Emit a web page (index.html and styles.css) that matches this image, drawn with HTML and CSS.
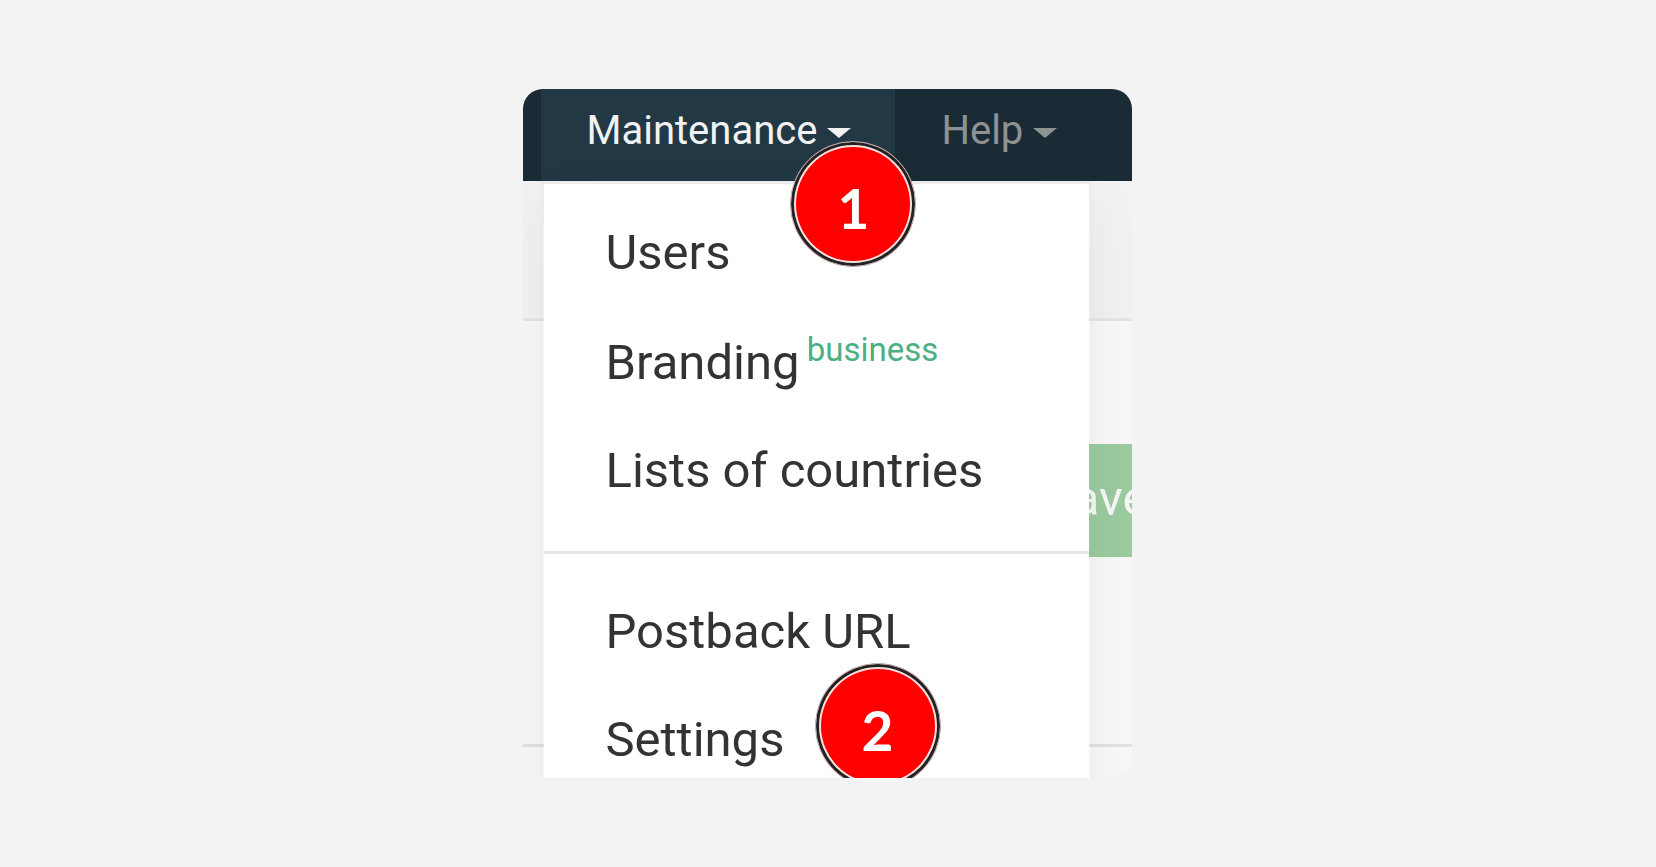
FILE: index.html
```
<!DOCTYPE html>
<html lang="en">
<head>
  <meta charset="UTF-8">
  <title>Maintenance</title>
  <meta name="viewport" content="width=device-width, initial-scale=1.0">
  <link rel="stylesheet" href="styles.css">
</head>
<body>
  <div class="card">
    <nav class="navbar">
      <div class="dropdown open">
        <button class="toggle" type="button" aria-expanded="true">Maintenance <span class="caret"></span></button>
        <ul class="menu">
          <li><a href="#">Users</a></li>
          <li><a href="#">Branding <sup>business</sup></a></li>
          <li><a href="#">Lists of countries</a></li>
          <li class="divider"></li>
          <li><a href="#">Postback URL</a></li>
          <li><a href="#">Settings</a><span class="badge badge-settings">2</span></li>
        </ul>
        <span class="badge badge-toggle">1</span>
      </div>
      <div class="dropdown">
        <button class="toggle" type="button">Help <span class="caret"></span></button>
      </div>
    </nav>

    <main class="page">
      <div class="page-header"></div>
      <div class="page-content">
        <button class="save" type="button">Save</button>
      </div>
      <div class="page-footer"></div>
    </main>
  </div>
</body>
</html>
```

FILE: styles.css
```
* {
  box-sizing: border-box;
}

body {
  margin: 0;
  padding: 89px 22px 89px 20px;
  height: 100vh;
  display: flex;
  justify-content: center;
  background: #f3f3f3;
  font-family: Roboto, "Liberation Sans", sans-serif;
}

.card {
  width: 100%;
  max-width: 609px;
  display: flex;
  flex-direction: column;
  overflow: hidden;
  border-radius: 20px;
}

/* top bar */
.navbar {
  position: relative;
  z-index: 1;
  display: flex;
  padding-left: 18px;
  background: #1b2b36;
}

.dropdown {
  position: relative;
}

.toggle {
  display: flex;
  align-items: center;
  gap: 10px;
  padding: 0 44px 8px 46px;
  border: none;
  background: none;
  color: #8f9293;
  font-family: inherit;
  font-size: 40px;
  line-height: 84px;
  cursor: pointer;
}

.open .toggle {
  background: #223845;
  color: #f2f2f2;
}

.caret {
  margin-top: 4px;
  border-top: 10px solid;
  border-left: 12px solid transparent;
  border-right: 12px solid transparent;
}

/* dropdown menu */
.menu {
  position: absolute;
  top: 100%;
  left: 0;
  width: 551px;
  margin: 0;
  padding: 15px 0;
  list-style: none;
  background: #fff;
  background-clip: padding-box;
  border: 3px solid rgba(0, 0, 0, 0.02);
  box-shadow: 0 18px 54px rgba(0, 0, 0, 0.06);
}

.menu li {
  position: relative;
}

.menu a {
  display: block;
  padding: 20px 62px;
  color: #333;
  font-size: 49px;
  line-height: 68px;
  text-decoration: none;
}

.menu sup {
  margin-left: -5px;
  color: #4db083;
  font-size: 33px;
  line-height: 46px;
  vertical-align: 18px;
}

.menu .divider {
  height: 3px;
  margin: 26px 0 24px;
  background: #e5e5e5;
}

/* numbered markers */
.badge {
  position: absolute;
  width: 126px;
  height: 126px;
  padding-top: 8px;
  border: 1px solid #b5b5b5;
  border-radius: 50%;
  background: #f00;
  box-shadow: inset 0 0 0 3px #222, inset 0 0 0 5px #fbe0e0;
  color: #fff;
  font: bold 55px/116px Lato, "DejaVu Sans", sans-serif;
  text-align: center;
}

.badge-toggle {
  top: 52px;
  right: -21px;
}

.badge-settings {
  top: -23px;
  left: 271px;
}

/* page under the menu */
.page {
  flex: 1;
  display: flex;
  flex-direction: column;
  background: #f8f8f8;
}

.page-header {
  height: 140px;
  background: #f2f2f2;
  border-bottom: 3px solid #e5e5e5;
}

.page-content {
  flex: 1;
  display: flex;
  align-items: flex-start;
  justify-content: flex-end;
  padding-top: 123px;
  border-bottom: 3px solid #e2e2e2;
}

.save {
  margin-right: -60px;
  padding: 2px 43px 6px;
  border: none;
  background: #9ccba0;
  color: #f5f8f5;
  font-family: inherit;
  font-size: 49px;
  line-height: 105px;
}

.page-footer {
  height: 31px;
}
```
